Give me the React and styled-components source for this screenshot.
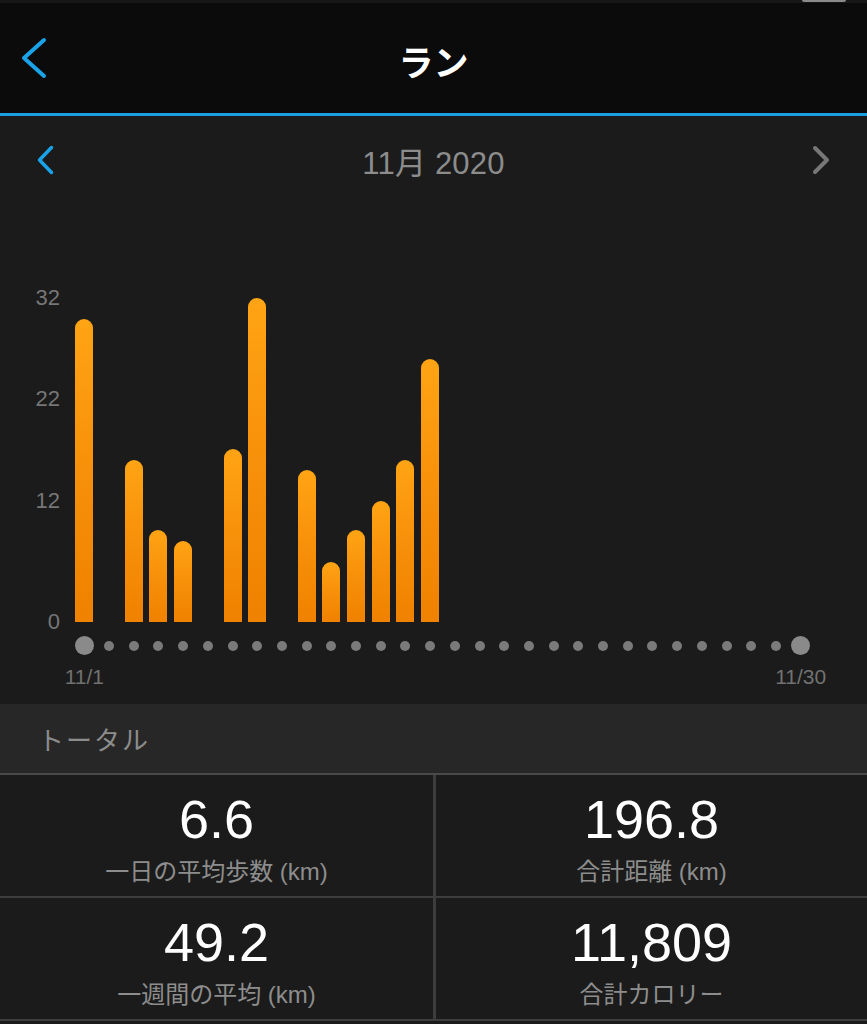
import React from 'react'
import styled, { createGlobalStyle } from 'styled-components'

const GlobalStyle = createGlobalStyle`
  html, body {
    margin: 0;
    padding: 0;
    background: #2a2a2a;
  }
  body {
    font-family: "Liberation Sans", "Noto Sans CJK JP", sans-serif;
    -webkit-font-smoothing: antialiased;
  }
`;

const SCALE = 10.125;
const DAYS = 30;

const runs = { 1: 29.9, 3: 16, 4: 9.1, 5: 8, 7: 17.1, 8: 32, 10: 15, 11: 5.9, 12: 9.1, 13: 12, 14: 16, 15: 26 };
const ticks = [0, 12, 22, 32];

const totals = [
  { value: '6.6', label: '一日の平均歩数 (km)' },
  { value: '196.8', label: '合計距離 (km)' },
  { value: '49.2', label: '一週間の平均 (km)' },
  { value: '11,809', label: '合計カロリー' },
];

const Page = styled.div`
  width: 867px;
  height: 1024px;
  overflow: hidden;
  background: #1b1b1b;
  display: flex;
  flex-direction: column;
`;

const StatusStrip = styled.div`
  height: 3px;
  background: #171717;
  display: flex;
  justify-content: flex-end;
  padding-right: 21px;
`;

const Battery = styled.div`
  width: 44px;
  height: 2px;
  background: #8a8a8a;
  border-radius: 0 0 2px 2px;
`;

const Header = styled.header`
  height: 110px;
  background: #0b0b0b;
  border-bottom: 3px solid #1a9fe0;
  display: grid;
  grid-template-columns: 1fr auto 1fr;
  align-items: center;
  padding: 0 20px;
`;

const Title = styled.h1`
  margin: 0;
  color: #ffffff;
  font-family: "Noto Sans CJK JP", sans-serif;
  font-size: 35px;
  font-weight: 700;
  line-height: 40px;
  padding-top: 6px;
`;

const IconButton = styled.button`
  background: none;
  border: none;
  padding: 0;
  display: flex;
  align-items: center;
  justify-self: ${p => (p.right ? 'end' : 'start')};
  cursor: pointer;
`;

const MonthNav = styled.div`
  height: 88px;
  display: grid;
  grid-template-columns: 1fr auto 1fr;
  align-items: center;
  padding: 0 36px 0 36px;
`;

const MonthLabel = styled.div`
  color: #8c8c8c;
  font-size: 31px;
  letter-spacing: 0.2px;
`;

const ChartSection = styled.section`
  padding: 76px 0 14px 0;
  display: flex;
  flex-direction: column;
`;

const ChartRow = styled.div`
  display: flex;
`;

const YAxis = styled.div`
  position: relative;
  width: 72px;
  height: 342px;
`;

const Tick = styled.span`
  position: absolute;
  right: 12px;
  transform: translateY(50%);
  color: #767676;
  font-size: 22px;
  line-height: 24px;
`;

const DayGrid = styled.div`
  width: 741px;
  display: grid;
  grid-template-columns: repeat(${DAYS}, minmax(0, 1fr));
`;

const Plot = styled(DayGrid)`
  height: 342px;
  align-items: end;
`;

const Bar = styled.div`
  justify-self: center;
  width: 18px;
  border-radius: 9px 9px 0 0;
  background: linear-gradient(180deg, #ffa414 0%, #f7900a 50%, #ef8200 100%);
`;

const DotRow = styled(DayGrid)`
  margin: 14px 0 0 72px;
  height: 19px;
  align-items: center;
`;

const Dot = styled.span`
  justify-self: center;
  width: ${p => (p.big ? 19 : 10)}px;
  height: ${p => (p.big ? 19 : 10)}px;
  border-radius: 50%;
  background: ${p => (p.big ? '#8a8a8a' : '#7a7a7a')};
`;

const DateRow = styled(DayGrid)`
  margin: 9px 0 0 72px;
`;

const DateCell = styled.div`
  grid-column: ${p => p.col};
  display: flex;
  justify-content: center;
`;

const DateLabel = styled.span`
  white-space: nowrap;
  color: #717171;
  font-size: 21px;
  line-height: 26px;
`;

const TotalsHeader = styled.div`
  height: 69px;
  background: #272727;
  display: flex;
  align-items: center;
  padding-left: 38px;
  color: #8c8c8c;
  font-family: "Noto Sans CJK JP", sans-serif;
  font-size: 26px;
  letter-spacing: 2px;
`;

const StatsGrid = styled.div`
  display: grid;
  grid-template-columns: 433px 1fr;
  grid-auto-rows: 121px;
  gap: 2px 3px;
  background: #3d3d3d;
  border-top: 2px solid #4a4a4a;
  border-bottom: 2px solid #3d3d3d;
`;

const Cell = styled.div`
  background: #1b1b1b;
  display: flex;
  flex-direction: column;
  align-items: center;
  padding-top: 14px;
`;

const Value = styled.div`
  color: #ffffff;
  font-size: 54px;
  line-height: 60px;
`;

const Label = styled.div`
  margin-top: 8px;
  color: #8d8d8d;
  font-size: 24px;
  line-height: 30px;
`;

const Chevron = ({ dir = 'left', color, w, h, stroke }) => (
  <svg width={w} height={h} viewBox={`0 0 ${w} ${h}`} fill="none">
    <polyline
      points={
        dir === 'left'
          ? `${w - stroke},${stroke} ${stroke},${h / 2} ${w - stroke},${h - stroke}`
          : `${stroke},${stroke} ${w - stroke},${h / 2} ${stroke},${h - stroke}`
      }
      stroke={color}
      strokeWidth={stroke}
      strokeLinecap="round"
      strokeLinejoin="round"
    />
  </svg>
);

const App = () => {
  const days = Array.from({ length: DAYS }, (_, i) => i + 1);

  return (
    <>
      <GlobalStyle />
      <Page>
        <StatusStrip>
          <Battery />
        </StatusStrip>
        <Header>
          <IconButton>
            <Chevron dir="left" color="#1aa3e8" w={28} h={44} stroke={4} />
          </IconButton>
          <Title>ラン</Title>
          <span />
        </Header>

        <MonthNav>
          <IconButton>
            <Chevron dir="left" color="#1aa3e8" w={19} h={32} stroke={3.5} />
          </IconButton>
          <MonthLabel>11月 2020</MonthLabel>
          <IconButton right>
            <Chevron dir="right" color="#777777" w={20} h={32} stroke={4} />
          </IconButton>
        </MonthNav>

        <ChartSection>
          <ChartRow>
            <YAxis>
              {ticks.map(t => (
                <Tick key={t} style={{ bottom: t * SCALE }}>{t}</Tick>
              ))}
            </YAxis>
            <Plot>
              {days.map(d =>
                runs[d] ? <Bar key={d} style={{ height: runs[d] * SCALE }} /> : <span key={d} />
              )}
            </Plot>
          </ChartRow>
          <DotRow>
            {days.map(d => (
              <Dot key={d} big={d === 1 || d === DAYS} />
            ))}
          </DotRow>
          <DateRow>
            <DateCell col={1}><DateLabel>11/1</DateLabel></DateCell>
            <DateCell col={DAYS}><DateLabel>11/30</DateLabel></DateCell>
          </DateRow>
        </ChartSection>

        <TotalsHeader>トータル</TotalsHeader>
        <StatsGrid>
          {totals.map(t => (
            <Cell key={t.label}>
              <Value>{t.value}</Value>
              <Label>{t.label}</Label>
            </Cell>
          ))}
        </StatsGrid>
      </Page>
    </>
  )
}

export default App
